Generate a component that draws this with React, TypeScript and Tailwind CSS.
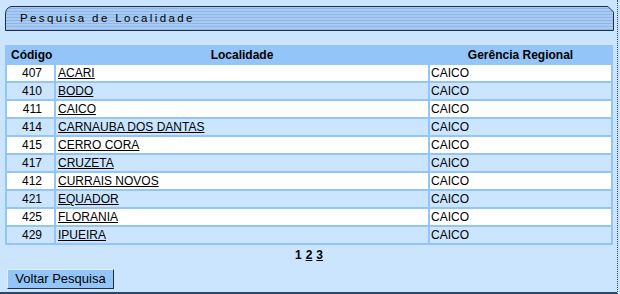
const rows = [
  { code: '407', name: 'ACARI', ger: 'CAICO' },
  { code: '410', name: 'BODO', ger: 'CAICO' },
  { code: '411', name: 'CAICO', ger: 'CAICO' },
  { code: '414', name: 'CARNAUBA DOS DANTAS', ger: 'CAICO' },
  { code: '415', name: 'CERRO CORA', ger: 'CAICO' },
  { code: '417', name: 'CRUZETA', ger: 'CAICO' },
  { code: '412', name: 'CURRAIS NOVOS', ger: 'CAICO' },
  { code: '421', name: 'EQUADOR', ger: 'CAICO' },
  { code: '425', name: 'FLORANIA', ger: 'CAICO' },
  { code: '429', name: 'IPUEIRA', ger: 'CAICO' },
];

function TitleBar({ title }: { title: string }) {
  return (
    <div className="relative h-[25px] w-[609px]">
      <svg className="absolute inset-0" width="609" height="25" viewBox="0 0 609 25">
        <defs>
          <pattern id="stripes" width="4" height="3" patternUnits="userSpaceOnUse">
            <rect width="4" height="3" fill="#a9caf1" />
            <rect y="2" width="4" height="1" fill="#8eb6e8" />
          </pattern>
        </defs>
        <path
          d="M0.5 24.5 L0.5 8 Q0.5 2 6 0.5 L603 0.5 L608.5 6 L608.5 24.5 Z"
          fill="url(#stripes)"
          stroke="#1d2f4a"
          strokeWidth="1"
        />
      </svg>
      <span className="relative block pl-[15px] pt-[5px] text-[11.5px] leading-[14px] tracking-[2.4px] text-black">
        {title}
      </span>
    </div>
  );
}

export default function App() {
  return (
    <div className="h-[294px] w-[620px] bg-[#cbe5fe] font-['Liberation_Sans',Arial,sans-serif] text-[12px] text-black">
      <div className="flex h-[294px] w-[618px] flex-col border-r border-dotted border-[#2a4668]">
        <div className="flex-1 pl-[5px] pt-[6px]">
          <TitleBar title="Pesquisa de Localidade" />

          <table className="mt-[14px] w-[608px] table-fixed border-separate border-spacing-[2px] bg-[#94c5f8]">
            <colgroup>
              <col className="w-[47px]" />
              <col className="w-[372px]" />
              <col className="w-[181px]" />
            </colgroup>
            <thead>
              <tr className="h-4">
                <th className="p-0 pl-1 text-left font-bold leading-4">Código</th>
                <th className="p-0 text-center font-bold leading-4">Localidade</th>
                <th className="p-0 text-center font-bold leading-4">Gerência Regional</th>
              </tr>
            </thead>
            <tbody>
              {rows.map((r, i) => {
                const bg = i % 2 === 0 ? 'bg-white' : 'bg-[#cbe5fe]';
                return (
                  <tr key={r.code} className="h-4">
                    <td className={`${bg} p-0 pr-3 text-right leading-4`}>{r.code}</td>
                    <td className={`${bg} p-0 pl-[2px] leading-4`}>
                      <a href="#" className="underline">
                        {r.name}
                      </a>
                    </td>
                    <td className={`${bg} p-0 pl-px leading-4`}>{r.ger}</td>
                  </tr>
                );
              })}
            </tbody>
          </table>

          <div className="mt-[3px] flex w-[608px] justify-center gap-[4px] text-[12px] font-bold leading-[14px]">
            <span>1</span>
            <a href="#" className="underline">2</a>
            <a href="#" className="underline">3</a>
          </div>

          <button className="ml-[2px] mt-[7px] h-[20px] w-[107px] border border-b-[#1e2d45] border-l-[#e6f0fb] border-r-[#1e2d45] border-t-[#e6f0fb] bg-[#94c5f8] p-0 text-[13px] leading-[16px] text-black">
            Voltar Pesquisa
          </button>
        </div>
        <div className="h-[2px] bg-[#2a4668]" />
      </div>
    </div>
  );
}
